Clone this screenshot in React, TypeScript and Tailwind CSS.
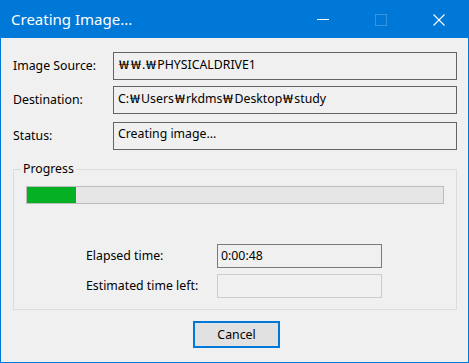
import React from "react";

const font = "font-['Segoe_UI','Noto_Sans','Noto_Sans_CJK_KR',sans-serif]";

function Won() {
  return (
    <span className="inline-block w-[12px] text-center font-['Noto_Sans_CJK_KR',sans-serif] scale-x-[1.45]">
      ₩
    </span>
  );
}

function renderPath(s: string) {
  const parts = s.split("₩");
  const out: React.ReactNode[] = [];
  parts.forEach((p, i) => {
    if (i > 0) out.push(<Won key={"w" + i} />);
    if (p) out.push(<span key={"t" + i}>{p}</span>);
  });
  return out;
}

function Field({ label, value }: { label: string; value: string }) {
  return (
    <div className="flex items-center">
      <div className="w-[100px] text-[12.3px] text-black leading-[16px]">{label}</div>
      <div className="flex-1 h-[28px] border border-[#646464] pl-[4px] pt-[3px] text-[12.3px] leading-[16px] text-black whitespace-nowrap overflow-hidden">
        {renderPath(value)}
      </div>
    </div>
  );
}

export default function App() {
  return (
    <div className={`w-[469px] h-[363px] border border-[#0078d7] bg-[#f0f0f0] flex flex-col overflow-hidden ${font}`}>
      {/* Title bar */}
      <div className="h-[37px] bg-[#0078d7] flex items-center shrink-0">
        <div className="flex-1 pl-[10px] text-[15px] text-white leading-[20px] pb-[1px]">Creating Image...</div>
        <div className="w-[58px] h-full flex items-center justify-center">
          <svg width="12" height="12" viewBox="0 0 12 12">
            <line x1="0" y1="5.5" x2="12" y2="5.5" stroke="#ffffff" strokeWidth="1" />
          </svg>
        </div>
        <div className="w-[58px] h-full flex items-center justify-center">
          <svg width="12" height="12" viewBox="0 0 12 12">
            <rect x="0.5" y="0.5" width="11" height="11" fill="none" stroke="#3593e0" strokeWidth="1" />
          </svg>
        </div>
        <div className="w-[58px] h-full flex items-center justify-center">
          <svg width="12" height="12" viewBox="0 0 12 12">
            <line x1="0.5" y1="0.5" x2="11.5" y2="11.5" stroke="#ffffff" strokeWidth="1.1" />
            <line x1="11.5" y1="0.5" x2="0.5" y2="11.5" stroke="#ffffff" strokeWidth="1.1" />
          </svg>
        </div>
      </div>

      {/* Content */}
      <div className="flex-1 flex flex-col pl-[12px] pr-[11px] pt-[14px]">
        <Field label="Image Source:" value="₩₩.₩PHYSICALDRIVE1" />
        <div className="h-[6px]" />
        <Field label="Destination:" value="C:₩Users₩rkdms₩Desktop₩study" />
        <div className="h-[8px]" />
        <Field label="Status:" value="Creating image..." />

        {/* Progress group */}
        <div className="relative mt-[19px] h-[141px] border border-[#dcdcdc] px-[12px] pt-[16px]">
          <div className="absolute left-[7px] top-[-9px] bg-[#f0f0f0] px-[2px] text-[12.3px] leading-[16px] text-black">
            Progress
          </div>
          <div className="h-[18px] border border-[#bcbcbc] bg-[#e6e6e6] flex">
            <div className="w-[49px] h-full bg-[#06b025]" />
          </div>
          <div className="mt-[40px] flex items-center pl-[60px]">
            <div className="w-[131px] text-[12.3px] leading-[16px] text-black">Elapsed time:</div>
            <div className="w-[165px] h-[24px] border border-[#7a7a7a] pl-[3px] pt-[3px] text-[12.3px] leading-[16px] text-black">
              0:00:48
            </div>
          </div>
          <div className="mt-[6px] flex items-center pl-[60px]">
            <div className="w-[131px] text-[12.3px] leading-[16px] text-black">Estimated time left:</div>
            <div className="w-[165px] h-[24px] border border-[#cccccc]" />
          </div>
        </div>

        <div className="mt-[11px] pl-[180px]">
          <div className="w-[87px] h-[27px] border-2 border-[#0078d7] bg-[#e1e1e1] flex items-center justify-center text-[12.3px] leading-[16px] text-black">
            Cancel
          </div>
        </div>
      </div>
    </div>
  );
}
